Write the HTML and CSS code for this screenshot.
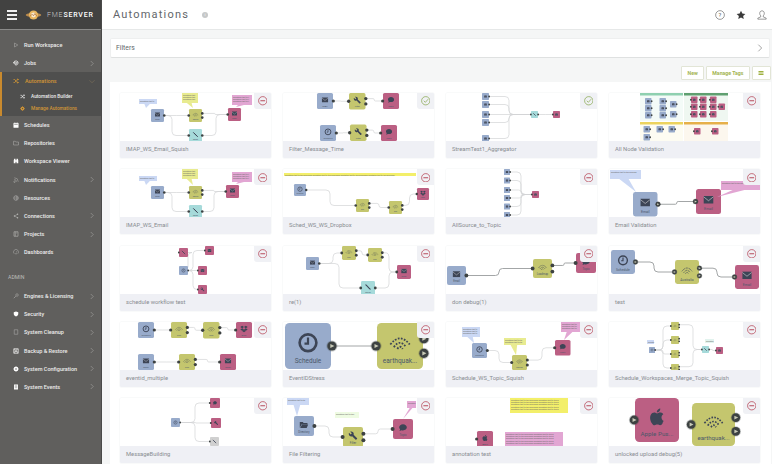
FILE: index.html
```html
<!DOCTYPE html>
<html lang="en">
<head>
    <meta charset="UTF-8">
    <meta name="viewport" content="width=device-width, initial-scale=1.0">
    <title>Automations - FME Server</title>
    <link rel="stylesheet" href="styles.css">
</head>
<body>
    <svg class="sprite" aria-hidden="true">
        <symbol id="s-play" viewBox="0 0 24 24"><path d="M6 4l13 8-13 8z" fill="none" stroke="currentColor" stroke-width="2"/></symbol>
        <symbol id="s-jobs" viewBox="0 0 24 24"><path d="M4 12a8 8 0 1 1 3 6M3 8v5h5M9 11h8M9 15h6" fill="none" stroke="currentColor" stroke-width="3"/></symbol>
        <symbol id="s-shuffle" viewBox="0 0 24 24"><path d="M2 6h5l9 12h5M2 18h5l9-12h5M18 3l4 3-4 3M18 15l4 3-4 3" fill="none" stroke="currentColor" stroke-width="3"/></symbol>
        <symbol id="s-gear" viewBox="0 0 24 24"><circle cx="12" cy="12" r="6" fill="none" stroke="currentColor" stroke-width="6"/><path d="M12 1v22M1 12h22M4 4l16 16M20 4L4 20" stroke="currentColor" stroke-width="3" stroke-dasharray="4 14"/></symbol>
        <symbol id="s-calendar" viewBox="0 0 24 24"><path d="M3 5h18v17H3zM7 2v4M17 2v4" fill="currentColor" stroke="currentColor" stroke-width="2"/><path d="M5 10h14" stroke="#5f5e5c" stroke-width="2"/></symbol>
        <symbol id="s-folder" viewBox="0 0 24 24"><path d="M2 5h7l2 3h11v12H2z" fill="none" stroke="currentColor" stroke-width="2"/></symbol>
        <symbol id="s-binoculars" viewBox="0 0 24 24"><path d="M3 21V9l2-6h5v18zM21 21V9l-2-6h-5v18zM10 9h4v6h-4z" fill="currentColor"/></symbol>
        <symbol id="s-rss" viewBox="0 0 24 24"><path d="M5 3a16 16 0 0 1 16 16M5 10a9 9 0 0 1 9 9" fill="none" stroke="currentColor" stroke-width="2"/><circle cx="6" cy="19" r="3" fill="none" stroke="currentColor" stroke-width="2"/></symbol>
        <symbol id="s-globe" viewBox="0 0 24 24"><circle cx="12" cy="12" r="9" fill="none" stroke="currentColor" stroke-width="2.5"/><path d="M3 12h18M12 3c5 5 5 13 0 18" fill="none" stroke="currentColor" stroke-width="2"/></symbol>
        <symbol id="s-share" viewBox="0 0 24 24"><path d="M18 5L6 12l12 7" fill="none" stroke="currentColor" stroke-width="2"/><circle cx="18" cy="5" r="3" fill="currentColor"/><circle cx="6" cy="12" r="3" fill="currentColor"/><circle cx="18" cy="19" r="3" fill="currentColor"/></symbol>
        <symbol id="s-book" viewBox="0 0 24 24"><path d="M4 3h16v18H4zM9 3v18M13 8h4" fill="none" stroke="currentColor" stroke-width="2.5"/></symbol>
        <symbol id="s-gauge" viewBox="0 0 24 24"><path d="M5 19a10 10 0 1 1 14 0M12 13l5-4M8 19h8" fill="none" stroke="currentColor" stroke-width="2"/></symbol>
        <symbol id="s-key" viewBox="0 0 24 24"><circle cx="16" cy="8" r="5" fill="none" stroke="currentColor" stroke-width="2"/><path d="M12 12L3 21M6 18l2 2" fill="none" stroke="currentColor" stroke-width="2"/></symbol>
        <symbol id="s-shield" viewBox="0 0 24 24"><path d="M12 2l9 3v7c0 5-4 8-9 10-5-2-9-5-9-10V5z" fill="currentColor"/></symbol>
        <symbol id="s-page" viewBox="0 0 24 24"><path d="M5 3h14v18H5z" fill="none" stroke="currentColor" stroke-width="2"/></symbol>
        <symbol id="s-disk" viewBox="0 0 24 24"><path d="M3 3h18v18H3zM7 3v6h9V3M7 21v-7h10v7" fill="none" stroke="currentColor" stroke-width="2.5"/></symbol>
        <symbol id="s-doc" viewBox="0 0 24 24"><path d="M4 2h16v20H4z" fill="currentColor"/><path d="M7 7h10M7 11h10M7 15h10" stroke="#5f5e5c" stroke-width="1.5"/></symbol>
        <symbol id="s-chevron" viewBox="0 0 24 24"><path d="M7 2l10 10L7 22" fill="none" stroke="currentColor" stroke-width="2"/></symbol>

        <symbol id="i-mail" viewBox="0 0 24 24"><path d="M2 4h20v16H2z" fill="currentColor"/><path d="M2 6l10 8 10-8" fill="none" stroke="#fff" stroke-opacity=".55" stroke-width="1.8"/></symbol>
        <symbol id="i-clock" viewBox="0 0 24 24"><circle cx="12" cy="12" r="9.5" fill="none" stroke="currentColor" stroke-width="3"/><path d="M12 6v7H8" fill="none" stroke="currentColor" stroke-width="2.5"/></symbol>
        <symbol id="i-wrench" viewBox="0 0 24 24"><path d="M22.7 19l-9.1-9.1c.9-2.3.4-5-1.5-6.9-2-2-5-2.4-7.4-1.3L9 6 6 9 1.6 4.7C.4 7.1.9 10.1 2.9 12.1c1.9 1.9 4.6 2.4 6.9 1.5l9.1 9.1c.4.4 1 .4 1.4 0l2.3-2.3c.5-.4.5-1.1.1-1.4z" fill="currentColor"/></symbol>
        <symbol id="i-chat" viewBox="0 0 24 24"><path d="M12 3C6.5 3 2 6.6 2 11c0 2 .9 3.8 2.4 5.2L3 21l5.3-2.2c1.2.4 2.4.5 3.7.5 5.5 0 10-3.6 10-8.1S17.5 3 12 3z" fill="currentColor"/></symbol>
        <symbol id="i-quake" viewBox="0 0 24 24"><path d="M1 14Q12 0 23 14M5 17Q12 7 19 17M9 19Q12 14 15 19" fill="none" stroke="currentColor" stroke-width="2" stroke-dasharray="2 1.6"/></symbol>
        <symbol id="i-link" viewBox="0 0 24 24"><path d="M4 4l6 6M14 14l6 6M9 9l6 6" fill="none" stroke="currentColor" stroke-width="4" stroke-linecap="round"/></symbol>
        <symbol id="i-folder" viewBox="0 0 24 24"><path d="M1 5h8l2 3h10v3H6l-5 9zM7 12h16l-4 9H2z" fill="currentColor"/></symbol>
        <symbol id="i-apple" viewBox="0 0 24 24"><path d="M18.7 19.5c-.8 1.2-1.7 2.4-3 2.4-1.3 0-1.8-.8-3.3-.8-1.5 0-2 .8-3.3.9-1.4 0-2.4-1.3-3.2-2.5C4.2 17 2.9 12.5 4.7 9.4c.9-1.5 2.4-2.5 4.1-2.5 1.3 0 2.5.9 3.3.9.8 0 2.2-1.1 3.8-.9.6 0 2.5.2 3.6 1.9-.1.1-2.2 1.3-2.2 3.8 0 3 2.6 4 2.6 4-.1.1-.5 1.4-1.4 2.7zM13 3.5c.7-.8 1.9-1.5 2.9-1.5.1 1.2-.4 2.4-1.1 3.2-.7.9-1.9 1.5-3 1.4-.2-1.1.4-2.3 1.2-3.1z" fill="currentColor"/></symbol>
        <symbol id="i-drop" viewBox="0 0 24 24"><path d="M6 2L0 6l6 4 6-4zM18 2l-6 4 6 4 6-4zM0 14l6 4 6-4-6-4zM18 10l-6 4 6 4 6-4zM6 19l6 4 6-4-6-4z" fill="currentColor"/></symbol>
    </svg>

    <div class="app">
        <aside class="sidebar">
            <div class="brand">
                <div class="burger"><span></span><span></span><span></span></div>
                <svg class="logo" viewBox="0 0 24 16"><ellipse cx="12" cy="8" rx="11" ry="3" fill="#b98a4e"/><circle cx="12" cy="8" r="6.5" fill="#e9b65f"/><circle cx="12" cy="8" r="3.4" fill="#f8ead0"/><path d="M7 10l3-3 2 2 2-3 3 4" fill="none" stroke="#a8642a" stroke-width="1"/></svg>
                <div class="brand-name"><span class="brand-fme">FME</span>SERVER</div>
            </div>
            <nav class="nav">
                <a class="nav-item"><svg class="nav-icon dim"><use href="#s-play"/></svg>Run Workspace</a>
                <a class="nav-item"><svg class="nav-icon"><use href="#s-jobs"/></svg>Jobs<svg class="chev"><use href="#s-chevron"/></svg></a>
                <div class="nav-group">
                    <a class="nav-item current"><svg class="nav-icon"><use href="#s-shuffle"/></svg>Automations<svg class="chev down"><use href="#s-chevron"/></svg></a>
                    <a class="nav-sub"><svg class="nav-icon"><use href="#s-shuffle"/></svg>Automation Builder</a>
                    <a class="nav-sub current"><svg class="nav-icon"><use href="#s-gear"/></svg>Manage Automations</a>
                </div>
                <a class="nav-item"><svg class="nav-icon"><use href="#s-calendar"/></svg>Schedules</a>
                <a class="nav-item"><svg class="nav-icon dim"><use href="#s-folder"/></svg>Repositories</a>
                <a class="nav-item"><svg class="nav-icon"><use href="#s-binoculars"/></svg>Workspace Viewer</a>
                <a class="nav-item"><svg class="nav-icon dim"><use href="#s-rss"/></svg>Notifications<svg class="chev"><use href="#s-chevron"/></svg></a>
                <a class="nav-item"><svg class="nav-icon dim"><use href="#s-globe"/></svg>Resources</a>
                <a class="nav-item"><svg class="nav-icon dim"><use href="#s-share"/></svg>Connections<svg class="chev"><use href="#s-chevron"/></svg></a>
                <a class="nav-item"><svg class="nav-icon dim"><use href="#s-book"/></svg>Projects<svg class="chev"><use href="#s-chevron"/></svg></a>
                <a class="nav-item"><svg class="nav-icon dim"><use href="#s-gauge"/></svg>Dashboards</a>
                <div class="nav-label">ADMIN</div>
                <a class="nav-item"><svg class="nav-icon dim"><use href="#s-key"/></svg>Engines &amp; Licensing<svg class="chev"><use href="#s-chevron"/></svg></a>
                <a class="nav-item"><svg class="nav-icon"><use href="#s-shield"/></svg>Security<svg class="chev"><use href="#s-chevron"/></svg></a>
                <a class="nav-item"><svg class="nav-icon dim"><use href="#s-page"/></svg>System Cleanup<svg class="chev"><use href="#s-chevron"/></svg></a>
                <a class="nav-item"><svg class="nav-icon"><use href="#s-disk"/></svg>Backup &amp; Restore<svg class="chev"><use href="#s-chevron"/></svg></a>
                <a class="nav-item"><svg class="nav-icon"><use href="#s-gear"/></svg>System Configuration<svg class="chev"><use href="#s-chevron"/></svg></a>
                <a class="nav-item"><svg class="nav-icon"><use href="#s-doc"/></svg>System Events<svg class="chev"><use href="#s-chevron"/></svg></a>
            </nav>
        </aside>

        <main class="main">
            <header class="topbar">
                <h1>Automations</h1>
                <span class="info-dot">i</span>
                <div class="top-actions">
                    <svg class="top-icon" viewBox="0 0 24 24"><circle cx="12" cy="12" r="10.5" fill="none" stroke="#555" stroke-width="1.4"/><text x="12" y="17" text-anchor="middle" font-size="14" fill="#555">?</text></svg>
                    <svg class="top-icon" viewBox="0 0 24 24"><path d="M12 1.5l3.2 7 7.3.8-5.4 5 1.5 7.5-6.6-3.8-6.6 3.8 1.5-7.5-5.4-5 7.3-.8z" fill="#3a3a3a"/></svg>
                    <svg class="top-icon" viewBox="0 0 24 24"><path d="M12 2c-3.500 0-5.500 2.700-5.500 6 0 2.500 1 4.500 2.500 6v2.500L2 19.500V22h20v-2.500l-7-3V14c1.500-1.500 2.500-3.500 2.500-6 0-3.300-2-6-5.500-6z" fill="none" stroke="#555" stroke-width="1.4"/></svg>
                </div>
            </header>

            <section class="filters">
                <span>Filters</span>
                <svg class="filters-chev"><use href="#s-chevron"/></svg>
            </section>

            <div class="toolbar">
                <button class="btn">New</button>
                <button class="btn">Manage Tags</button>
                <button class="btn btn-icon"><svg viewBox="0 0 24 24"><path d="M2 4h20v4H2zM2 10h20v4H2zM2 16h20v4H2z" fill="#9db03e"/></svg></button>
            </div>

            <section class="panel">
                <div class="card-grid" id="cards"></div>
            </section>
        </main>
    </div>

    <script src="script.js"></script>
</body>
</html>
```

FILE: styles.css
```css
* {
    box-sizing: border-box;
}

html, body {
    margin: 0;
    padding: 0;
    background-color: #fff;
}

body {
    font-family: Roboto, "Liberation Sans", sans-serif;
    overflow: hidden;
}

.sprite {
    display: none;
}

symbol {
    overflow: visible;
}

.app {
    display: flex;
    height: 464px;
    overflow: hidden;
}

/* sidebar */
.sidebar {
    width: 102px;
    flex: none;
    background-color: #605f5d;
    border-right: 1px solid #4a4a49;
    color: #ececec;
}

.brand {
    display: flex;
    align-items: center;
    height: 30px;
    padding-left: 7px;
    background-color: #424241;
    border-bottom: 1px solid #8a8a89;
}

.burger {
    display: flex;
    flex-direction: column;
    gap: 2px;
    width: 10px;
}

.burger span {
    height: 2px;
    background-color: #f0f0f0;
}

.logo {
    width: 17px;
    height: 12px;
    margin-left: 8px;
}

.brand-name {
    margin-left: 5px;
    font-size: 7px;
    font-weight: 500;
    letter-spacing: .8px;
    color: #fff;
}

.brand-fme {
    font-weight: 300;
    color: #c9c9c9;
}

.nav {
    padding-top: 6px;
}

.nav-item, .nav-sub {
    display: flex;
    align-items: center;
    font-weight: 500;
}

.nav-item {
    height: 18.2px;
    padding-left: 14px;
    font-size: 5.5px;
}

.nav-sub {
    height: 12.2px;
    padding-left: 21px;
    font-size: 4.8px;
}

.nav-icon {
    width: 6px;
    height: 6px;
    margin-left: -1px;
    margin-right: 5px;
    flex: none;
    color: #fff;
}

.nav-sub .nav-icon {
    margin-right: 6px;
    width: 5px;
    height: 5px;
}

.nav-icon.dim {
    color: #b4b4b2;
}

.chev {
    width: 6px;
    height: 7px;
    margin-left: auto;
    margin-right: 6px;
    color: #b0b0ae;
}

.chev.down {
    transform: rotate(90deg);
    color: #8b7a5e;
}

.nav-group {
    background-color: #4f4f4e;
    border-left: 2px solid #c98a2e;
    padding-bottom: 1px;
}

.nav-group .nav-item {
    padding-left: 12px;
}

.nav-group .nav-item .nav-icon {
    margin-right: 6px;
}

.nav-group .nav-sub {
    padding-left: 19px;
}

.current {
    color: #d09536;
}

.current .nav-icon {
    color: #d09536;
}

.nav-label {
    padding: 12.500px 0 0 8px;
    height: 25.500px;
    font-size: 5.2px;
    color: #bdbdbb;
}

/* main */
.main {
    flex: 1;
    min-width: 0;
    background-color: #f5f6f6;
}

.topbar {
    display: flex;
    align-items: center;
    height: 30px;
    padding: 0 5px 0 11px;
    background-color: #fff;
    border-bottom: 1px solid #e6e8e8;
}

h1 {
    margin: 0;
    font-size: 11px;
    font-weight: 400;
    letter-spacing: 1.2px;
    color: #62666a;
}

.info-dot {
    display: flex;
    justify-content: center;
    align-items: center;
    width: 6px;
    height: 6px;
    margin-left: 13px;
    border-radius: 50%;
    font-size: 4px;
    color: #fff;
    background-color: #c6c8c9;
}

.top-actions {
    display: flex;
    gap: 11px;
    margin-left: auto;
}

.top-icon {
    width: 10px;
    height: 10px;
}

.filters {
    display: flex;
    align-items: center;
    justify-content: space-between;
    height: 20px;
    margin: 8px 2px 0 8px;
    padding: 0 5px;
    font-size: 6.8px;
    color: #62666a;
    background-color: #fff;
    border: 1px solid #eeefef;
    border-bottom: 1px solid #dfe1e1;
    border-radius: 2px;
}

.filters-chev {
    width: 8px;
    height: 8px;
    color: #777;
}

.toolbar {
    display: flex;
    justify-content: flex-end;
    gap: 1.5px;
    height: 24px;
    padding: 8px 1.500px 0 0;
}

.btn {
    height: 14px;
    padding: 0 5.5px;
    font-family: inherit;
    font-size: 5.2px;
    font-weight: 700;
    color: #a3b452;
    background-color: #fff;
    border: 1px solid #e2e5d6;
    border-radius: 1px;
}

.btn-icon {
    display: flex;
    justify-content: center;
    align-items: center;
    width: 19px;
    padding: 0;
}

.btn-icon svg {
    width: 6px;
    height: 6px;
}

.panel {
    height: 382px;
    margin-left: 8px;
    margin-right: 1px;
    padding: 11px 0 0 10px;
    background-color: #fff;
}

.card-grid {
    display: grid;
    grid-template-columns: repeat(4, 151px);
    grid-auto-rows: 65px;
    gap: 11.25px 12px;
}

.card {
    display: flex;
    flex-direction: column;
    position: relative;
    overflow: hidden;
    border-radius: 1px;
    background-color: #fff;
    box-shadow: 0 0 0 .5px #f4f5f6;
}

.canvas {
    display: block;
    width: 151px;
    height: 48px;
    flex: none;
}

.card-name {
    flex: 1;
    padding: 5px 6px 0;
    font-size: 5.8px;
    color: #888c91;
    background-color: #eff0f5;
    white-space: nowrap;
}

/* sits on top of the diagram corner */
.badge {
    display: flex;
    justify-content: center;
    align-items: center;
    position: absolute;
    top: 0;
    right: 0;
    width: 17px;
    height: 16px;
    background-color: #f0f1f5;
    border-bottom-left-radius: 3px;
}

.badge svg {
    width: 9.5px;
    height: 9.5px;
}

.wire {
    fill: none;
    stroke: #d2d4d5;
    stroke-width: .7;
}

.wire.bold {
    stroke: #a3a6a7;
    stroke-width: 1;
}

.node-label {
    font-size: 3.4px;
    fill: #4b586a;
    text-anchor: middle;
}

.note-text {
    font-size: 1.8px;
    fill: #666;
}
```

FILE: script.js
```js
const COLORS = { blue: '#98abcb', olive: '#c4c66e', pink: '#bb5f83', teal: '#a6dada', grey: '#d0d0d0' };
const NOTES = { b: '#cbd8f4', y: '#e8eb90', p: '#e2a6d3', g: '#eefbe2', Y: '#f3ef6a', t: '#e2f3ee' };

// node: [icon, colour, x, y, size, kind, label]. kind s=source d=dest x=transformer l=link
// wire: [from, to, outPort, midX]
// note: [x, y, w, h, colour, tailX, tailY, lines]
const CARDS = [
    { name: 'IMAP_WS_Email_Squish',
      nodes: [['mail', 'blue', 31, 16, 13, 's', 'Email'], ['quake', 'olive', 69, 16, 13, 'x', 'Squish'], ['mail', 'pink', 108, 15, 13, 'd', 'Email'], ['link', 'teal', 69, 36, 13, 'l', 'Merge']],
      wires: [[0, 1], [0, 3, 0, 52], [1, 2, 0, 95], [3, 2, 0, 96]],
      notes: [[19, 6, 18, 5, 'b', 26, 15], [62, 0, 16, 10, 'y', 73, 15], [112, 2, 20, 10, 'p', 116, 14]] },
    { name: 'Filter_Message_Time', on: true,
      nodes: [['mail', 'blue', 34, 0, 16, 's', 'IMAP'], ['wrench', 'olive', 66, 0, 16.5, 'x', 'Filter'], ['chat', 'pink', 100, 0, 16, 'd', 'Topic'], ['clock', 'blue', 37, 32, 16, 's', 'Schedule'], ['wrench', 'olive', 67, 31.500, 16.5, 'x', 'Filter'], ['chat', 'pink', 98, 32, 16, 'd', 'Topic']],
      wires: [[0, 1], [1, 2], [3, 4], [4, 5]] },
    { name: 'StreamTest1_Aggregator', on: true,
      nodes: [['mail', 'blue', 36, 0, 7, 's'], ['mail', 'blue', 36, 8, 7, 's'], ['mail', 'blue', 36, 18, 7, 's'], ['mail', 'blue', 36, 26, 7, 's'], ['mail', 'blue', 36, 42, 7, 's'], ['link', 'teal', 85, 18, 7, 'l'], ['mail', 'pink', 107, 18, 7, 'd']],
      wires: [[0, 5, 0, 63], [1, 5, 0, 63], [2, 5, 0, 63], [3, 5, 0, 63], [4, 5, 0, 63], [5, 6]] },
    { name: 'All Node Validation',
      zones: [[31, 0, 43, 28, '#8fd0b0', '#f4fbf8'], [75, 0, 44, 28, '#5f9f70', '#eff7f1'], [31, 29, 43, 19, '#ecd35e', '#fdfcf2'], [75, 29, 44, 19, '#e6b04a', '#fcf7ee']],
      nodes: [[36, 5], [50.5, 5], [36, 12], [50.5, 12], [36, 19], [50.5, 19], [61, 8], [61, 18], [34.5, 33], [47.500, 33], [59.500, 33], [34.5, 41]].map(p => ['mail', 'blue', p[0], p[1], 6.5, 's'])
          .concat([[82, 3.5], [91, 3.5], [101, 3.5], [82, 10.5], [91, 10.5], [101, 10.5], [109.5, 10.5], [82, 18], [91, 18], [101, 18], [85, 35], [103, 35]].map(p => ['mail', 'pink', p[0], p[1], 6.5, 'd'])) },

    { name: 'IMAP_WS_Email',
      nodes: [['mail', 'blue', 31, 17, 13, 's', 'Email'], ['quake', 'olive', 69, 17, 13, 'x', 'Squish'], ['mail', 'pink', 106, 16, 13, 'd', 'Email'], ['link', 'teal', 69, 36, 13, 'l', 'Merge']],
      wires: [[0, 1], [0, 3, 0, 52], [1, 2, 0, 94], [3, 2, 0, 94]],
      notes: [[19, 7, 18, 5, 'b', 26, 16], [62, 0, 16, 10, 'y', 73, 16], [112, 3, 20, 10, 'p', 116, 15]] },
    { name: 'Sched_WS_WS_Dropbox',
      nodes: [['clock', 'blue', 11, 15, 12, 's', 'Schedule'], ['quake', 'olive', 73, 30, 13, 'x', 'Run'], ['quake', 'olive', 106, 32, 13, 'x', 'Run'], ['drop', 'pink', 134, 19, 12, 'd', 'Drop']],
      wires: [[0, 1, 0, 47], [1, 2], [2, 3]],
      notes: [[1, 4, 132, 3, 'Y', undefined, undefined, 1]] },
    { name: 'AllSource_to_Topic',
      nodes: [0, 8.5, 18, 26, 34.5, 43].map(y => ['mail', 'blue', 58, y, 6, 's']).concat([['mail', 'pink', 86, 22, 7, 'd']]),
      wires: [0, 1, 2, 3, 4, 5].map(i => [i, 6, 0, 75]) },
    { name: 'Email Validation', bold: true,
      nodes: [['mail', 'blue', 24, 23, 24.5, 's', 'Email'], ['mail', 'pink', 87, 20, 25, 'd', 'Email']],
      wires: [[0, 1]],
      notes: [[1, 1, 31, 9, 'b', 27, 23, 1], [112, 12, 39, 9, 'p', 108, 28, 1]] },

    { name: 'schedule workflow test',
      nodes: [['link', 'pink', 59, 2, 9, 'd'], ['clock', 'blue', 59, 20, 9, 's'], ['mail', 'pink', 78, 20, 9, 'd'], ['mail', 'pink', 85, 0, 9, 'd'], ['wrench', 'pink', 78, 39, 9, 'd']],
      wires: [[1, 2], [1, 3, 0, 73], [1, 4, 0, 73], [1, 0, 0, 68]] },
    { name: 're(1)',
      nodes: [['mail', 'blue', 23, 11, 13, 's', 'Email'], ['quake', 'olive', 59, 0, 14, 'x', 'Run'], ['quake', 'olive', 85, 2, 14, 'x', 'Run'], ['mail', 'pink', 114, 19, 14, 'd', 'Email'], ['link', 'teal', 78, 35, 14, 'l', 'Merge']],
      wires: [[0, 1, 0, 50], [0, 4, 0, 56], [1, 2], [2, 3, 0, 106], [4, 3, 0, 106]] },
    { name: 'don debug(1)', bold: true,
      nodes: [['mail', 'blue', 1, 20, 19, 's', 'Email'], ['quake', 'olive', 87, 13, 19, 'x', 'Loadmap'], ['chat', 'pink', 130, 7, 20, 'd', 'Topic']],
      wires: [[0, 1, 0, 53], [1, 2, 0, 118]] },
    { name: 'test', bold: true,
      nodes: [['clock', 'blue', 2, 4, 24, 's', 'Schedule'], ['quake', 'olive', 66, 14, 24, 'x', 'Australia'], ['mail', 'pink', 126, 19, 24, 'd', 'Email']],
      wires: [[0, 1, 0, 45], [1, 2, 0, 108]] },

    { name: 'eventid_multiple',
      nodes: [['clock', 'blue', 18, 0, 16, 's', 'Schedule'], ['quake', 'olive', 51, 0, 16, 'x', 'Run'], ['quake', 'olive', 83, 0, 16.5, 'x', 'Run'], ['drop', 'pink', 116, 0, 16, 'd', 'Drop'], ['mail', 'blue', 18, 32, 16, 's', 'Email'], ['quake', 'olive', 59, 32, 16, 'x', 'Run'], ['mail', 'pink', 100, 32, 16, 'd', 'Email']],
      wires: [[0, 1], [1, 2], [2, 3], [4, 5], [5, 6]] },
    { name: 'EventIDStress', bold: true,
      nodes: [['clock', 'blue', 2, 1, 46, 's', 'Schedule'], ['quake', 'olive', 94, 1, 46, 'x', 'earthquak...']],
      wires: [[0, 1]] },
    { name: 'Schedule_WS_Topic_Squish',
      nodes: [['clock', 'blue', 26, 21, 15, 's', 'Schedule'], ['quake', 'olive', 66, 33, 15, 'x', 'Squish'], ['chat', 'pink', 109, 18, 15.5, 'd', 'Topic']],
      wires: [[0, 1, 0, 53], [1, 2, 0, 96]],
      notes: [[16, 5, 18, 10, 'b', 28, 21], [58, 16, 22, 7, 'y', 70, 33], [115, 0, 19, 10, 'p', 118, 18]] },
    { name: 'Schedule_Workspaces_Merge_Topic_Squish',
      nodes: [['clock', 'blue', 40, 25, 6, 's'], ['quake', 'olive', 62, 0, 8, 'x'], ['quake', 'olive', 62, 14, 8, 'x'], ['quake', 'olive', 62, 28, 8, 'x'], ['quake', 'olive', 62, 42, 8, 'x'], ['link', 'teal', 93, 24, 7, 'l'], ['mail', 'pink', 107, 25, 7, 'd']],
      wires: [[0, 1, 0, 54], [0, 2, 0, 54], [0, 3, 0, 54], [0, 4, 0, 54], [1, 5, 0, 84], [4, 5, 0, 84], [5, 6]],
      notes: [[38, 18, 7, 4, 'b'], [96, 17, 9, 4, 't']] },

    { name: 'MessageBuilding',
      nodes: [['clock', 'blue', 51, 20, 9, 's'], ['chat', 'pink', 90, 0, 10, 'd'], ['wrench', 'pink', 91, 20, 10, 'd'], ['link', 'grey', 90, 39, 9, 'd']],
      wires: [[0, 1, 0, 75], [0, 2], [0, 3, 0, 75]] },
    { name: 'File Filtering',
      nodes: [['folder', 'blue', 11, 18, 20, 's', 'Directory'], ['wrench', 'olive', 60, 29, 20, 'x', 'Filter'], ['chat', 'pink', 110, 21, 20, 'd', 'Topic']],
      wires: [[0, 1, 0, 46], [1, 2, 0, 95]],
      notes: [[4, 0, 22, 7, 'b', 14, 18, 1], [52, 14, 24, 6, 'g', undefined, undefined, 1], [124, 3, 9, 7, 'p', 120, 21, 1]] },
    { name: 'annotation test',
      nodes: [['apple', 'pink', 31, 33, 16, 'd', 'Apple']],
      notes: [[64, 0, 58, 15, 'Y'], [59, 34, 58, 14, 'p']] },
    { name: 'unlocked upload debug(5)', bold: true,
      nodes: [['apple', 'pink', 26, 0, 44, 'd', 'Apple Pus...'], ['quake', 'olive', 83, 5, 43, 'x', 'earthquak...']] }
];

function portY(node, out) {
    const size = node[4];
    if (node[5] === 'x' && out !== undefined) return node[3] + size * (out ? 0.66 : 0.34);
    return node[3] + size / 2;
}

function drawPort(cx, cy, size) {
    const r = Math.max(size * 0.1, 0.9);
    if (size <= 20) return `<circle cx="${cx}" cy="${cy}" r="${r}" fill="#3d4242"/>`;
    const mark = `<path d="M${cx - r * 0.35} ${cy - r * 0.45}l${r * 0.9} ${r * 0.45}-${r * 0.9} ${r * 0.45}z" fill="#c9cbb8"/>`;
    return `<circle cx="${cx}" cy="${cy}" r="${r}" fill="#3d4242" stroke="#3d4242" stroke-opacity=".3" stroke-width="${r * 0.4}"/>${mark}`;
}

function drawNode(node) {
    const [icon, colour, x, y, size, kind, label] = node;
    const k = size / 24;
    let html = `<rect x="${x}" y="${y}" width="${size}" height="${size}" rx="${size * 0.1}" fill="${COLORS[colour]}"/>`;
    const iconSize = size * 0.46;
    const iconY = label ? y + size * 0.2 : y + size * 0.27;
    html += `<use href="#i-${icon}" x="${x + (size - iconSize) / 2}" y="${iconY}" width="${iconSize}" height="${iconSize}" color="#3d4556"/>`;
    if (label) {
        const lx = x + size / 2;
        const ly = y + size * 0.86;
        html += `<text class="node-label" x="${lx}" y="${ly}" transform="translate(${lx} ${ly}) scale(${k}) translate(${-lx} ${-ly})">${label}</text>`;
    }
    if (kind !== 's') html += drawPort(x - size * 0.02, y + size / 2, size);
    if (kind === 's' || kind === 'l') html += drawPort(x + size * 1.02, y + size / 2, size);
    if (kind === 'x') {
        html += drawPort(x + size * 1.02, portY(node, 0), size);
        html += drawPort(x + size * 1.02, portY(node, 1), size);
    }
    return html;
}

function drawWire(nodes, wire, bold) {
    const [from, to, out, mid] = wire;
    const a = nodes[from];
    const b = nodes[to];
    const x1 = a[2] + a[4];
    const y1 = portY(a, a[5] === 'x' ? out || 0 : undefined);
    const x2 = b[2];
    const y2 = b[3] + b[4] / 2;
    const mx = mid !== undefined ? mid : (x1 + x2) / 2;
    const dy = y2 - y1;
    const r = Math.min(4, Math.abs(dy) / 2);
    const sign = dy < 0 ? -1 : 1;
    const d = `M${x1} ${y1}H${mx - r}Q${mx} ${y1} ${mx} ${y1 + sign * r}V${y2 - sign * r}Q${mx} ${y2} ${mx + r} ${y2}H${x2}`;
    return `<path class="wire${bold ? ' bold' : ''}" d="${d}"/>`;
}

function drawNote(note) {
    const [x, y, w, h, colour, tx, ty, lines] = note;
    let html = '';
    if (tx !== undefined) {
        html += `<path d="M${x + w * 0.3} ${y + h}L${tx} ${ty}L${x + w * 0.6} ${y + h}z" fill="${NOTES[colour]}"/>`;
    }
    html += `<rect x="${x}" y="${y}" width="${w}" height="${h}" fill="${NOTES[colour]}"/>`;
    const count = lines || Math.floor((h - 1) / 2.4);
    const text = 'annotation text for this workspace annotation text for this workspace annotation text for this workspace annotation text for this workspace'.slice(0, Math.floor(w / 0.95));
    for (let line = 0; line < count; line++) {
        html += `<text class="note-text" x="${x + 1}" y="${y + 2.6 + line * 2.4}">${text}</text>`;
    }
    return html;
}

function drawZone(zone) {
    const [x, y, w, h, head, body] = zone;
    return `<rect x="${x}" y="${y}" width="${w}" height="${h}" fill="${body}"/><rect x="${x}" y="${y}" width="${w}" height="2.500" fill="${head}"/>`;
}

const BADGE_OFF = '<svg viewBox="0 0 24 24"><circle cx="12" cy="12" r="10.500" fill="none" stroke="#b8495a" stroke-width="2"/><path d="M6 12h12" stroke="#b8495a" stroke-width="2.500"/></svg>';
const BADGE_ON = '<svg viewBox="0 0 24 24"><circle cx="12" cy="12" r="10.500" fill="none" stroke="#8fac5a" stroke-width="2"/><path d="M7 12l4 4 7-8" fill="none" stroke="#8fac5a" stroke-width="2"/></svg>';

function renderCards() {
    const grid = document.getElementById('cards');
    CARDS.forEach(card => {
        const nodes = card.nodes || [];
        const body = [
            (card.zones || []).map(drawZone).join(''),
            (card.wires || []).map(w => drawWire(nodes, w, card.bold)).join(''),
            nodes.map(drawNode).join(''),
            (card.notes || []).map(drawNote).join('')
        ].join('');
        const el = document.createElement('article');
        el.className = 'card';
        el.innerHTML = `
            <svg class="canvas" viewBox="0 0 151 48">${body}</svg>
            <span class="badge">${card.on ? BADGE_ON : BADGE_OFF}</span>
            <div class="card-name">${card.name}</div>`;
        grid.appendChild(el);
    });
}

renderCards();
```
